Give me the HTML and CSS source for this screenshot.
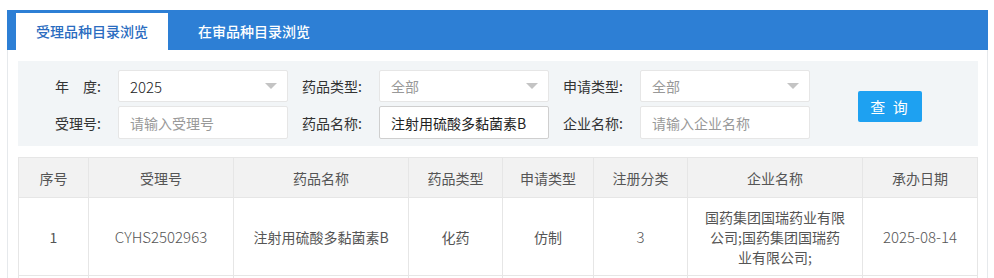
FILE: index.html
```
<!DOCTYPE html>
<html>
<head>
    <meta charset="utf-8" />
    <title>受理品种目录浏览</title>
    <link rel="stylesheet" href="styles.css">
</head>
<body>
    <div class="page">
        <div class="tabs">
            <div class="tab active">受理品种目录浏览</div>
            <div class="tab">在审品种目录浏览</div>
        </div>

        <div class="content">
            <div class="filters">
                <div class="fields">
                    <label class="lbl">年　度:</label>
                    <div class="select"><span class="val">2025</span><i class="arrow"></i></div>
                    <label class="lbl">药品类型:</label>
                    <div class="select"><span class="ph">全部</span><i class="arrow"></i></div>
                    <label class="lbl">申请类型:</label>
                    <div class="select"><span class="ph">全部</span><i class="arrow"></i></div>

                    <label class="lbl">受理号:</label>
                    <input class="inp" type="text" placeholder="请输入受理号">
                    <label class="lbl">药品名称:</label>
                    <input class="inp filled" type="text" value="注射用硫酸多黏菌素B">
                    <label class="lbl">企业名称:</label>
                    <input class="inp" type="text" placeholder="请输入企业名称">
                </div>
                <button class="btnSearch">查 询</button>
            </div>

            <table class="grid">
                <colgroup>
                    <col style="width: 70px">
                    <col style="width: 145px">
                    <col style="width: 175px">
                    <col style="width: 94px">
                    <col style="width: 91px">
                    <col style="width: 94px">
                    <col style="width: 175px">
                    <col>
                </colgroup>
                <tr>
                    <th>序号</th>
                    <th>受理号</th>
                    <th>药品名称</th>
                    <th>药品类型</th>
                    <th>申请类型</th>
                    <th>注册分类</th>
                    <th>企业名称</th>
                    <th>承办日期</th>
                </tr>
                <tr>
                    <td>1</td>
                    <td class="num">CYHS2502963</td>
                    <td>注射用硫酸多黏菌素B</td>
                    <td>化药</td>
                    <td>仿制</td>
                    <td class="num">3</td>
                    <td class="company">国药集团国瑞药业有限公司;国药集团国瑞药业有限公司;</td>
                    <td class="num">2025-08-14</td>
                </tr>
                <tr class="next">
                    <td></td><td></td><td></td><td></td><td></td><td></td><td></td><td></td>
                </tr>
            </table>
        </div>
    </div>
</body>
</html>
```

FILE: styles.css
```
body {
    margin: 0;
    background: #fff;
    font-family: "Noto Sans CJK SC", "Noto Sans", sans-serif;
    font-size: 14px;
    color: #333;
    overflow: hidden;
}

.page {
    margin: 10px 0 0 7px;
    width: 981px;
}

.tabs {
    display: flex;
    gap: 10px;
    height: 40px;
    background: #2d7fd5;
    padding: 3px 0 0 9px;
    box-sizing: border-box;
}

.tab {
    width: 152px;
    height: 37px;
    line-height: 37px;
    text-align: center;
    color: #fff;
    font-size: 14px;
    font-weight: 500;
}

.tab.active {
    background: #fff;
    color: #2a6cc0;
}

.content {
    border-left: 1px solid #e6e9ec;
    border-right: 1px solid #e6e9ec;
    padding: 11px 9px 0 10px;
    height: 217px;
    overflow: hidden;
}

.filters {
    display: flex;
    align-items: center;
    background: #f2f5f7;
    height: 85px;
    box-sizing: border-box;
    padding-top: 2px;
}

.fields {
    display: grid;
    grid-template-columns: 100px 170px 91px 170px 91px 170px;
    grid-template-rows: 32px 33px;
    row-gap: 4px;
    align-items: center;
}

.lbl {
    text-align: right;
    padding-right: 17px;
    color: #333;
}

.select,
.inp {
    height: 32px;
    box-sizing: border-box;
    background: #fff;
    border: 1px solid #e6e6e6;
    border-radius: 2px;
    padding: 0 11px;
    font-family: inherit;
    font-size: 14px;
    color: #333;
}

.select {
    display: flex;
    align-items: center;
    justify-content: space-between;
}

.val {
    font-size: 15px;
    font-weight: 300;
    color: #222;
}

.ph,
.inp::placeholder {
    color: #999;
}

.arrow {
    width: 0;
    height: 0;
    border-left: 6px solid transparent;
    border-right: 6px solid transparent;
    border-top: 6px solid #c4c4c4;
    margin-right: -1px;
}

.inp {
    height: 33px;
    outline: none;
}

.inp.filled {
    border-color: #cfcfcf;
    color: #222;
}

.btnSearch {
    margin-left: 48px;
    margin-top: 3px;
    width: 64px;
    height: 31px;
    border: none;
    border-radius: 2px;
    background: #1ea1f1;
    color: #fff;
    font-family: inherit;
    font-size: 15px;
    letter-spacing: 2px;
    padding: 0;
}

.grid {
    margin-top: 11px;
    width: 960px;
    border-collapse: collapse;
    table-layout: fixed;
    color: #555;
}

.grid th,
.grid td {
    border: 1px solid #e6e6e6;
    text-align: center;
    font-weight: normal;
}

.grid th {
    background: #f2f2f2;
    height: 39px;
    padding: 0;
}

.grid td {
    height: 77px;
    padding: 0 10px;
    line-height: 20px;
}

.grid td.num {
    font-size: 15px;
    font-weight: 300;
}

.grid td.company {
    padding: 0 16px;
}

.grid tr.next td {
    height: 20px;
}
```
